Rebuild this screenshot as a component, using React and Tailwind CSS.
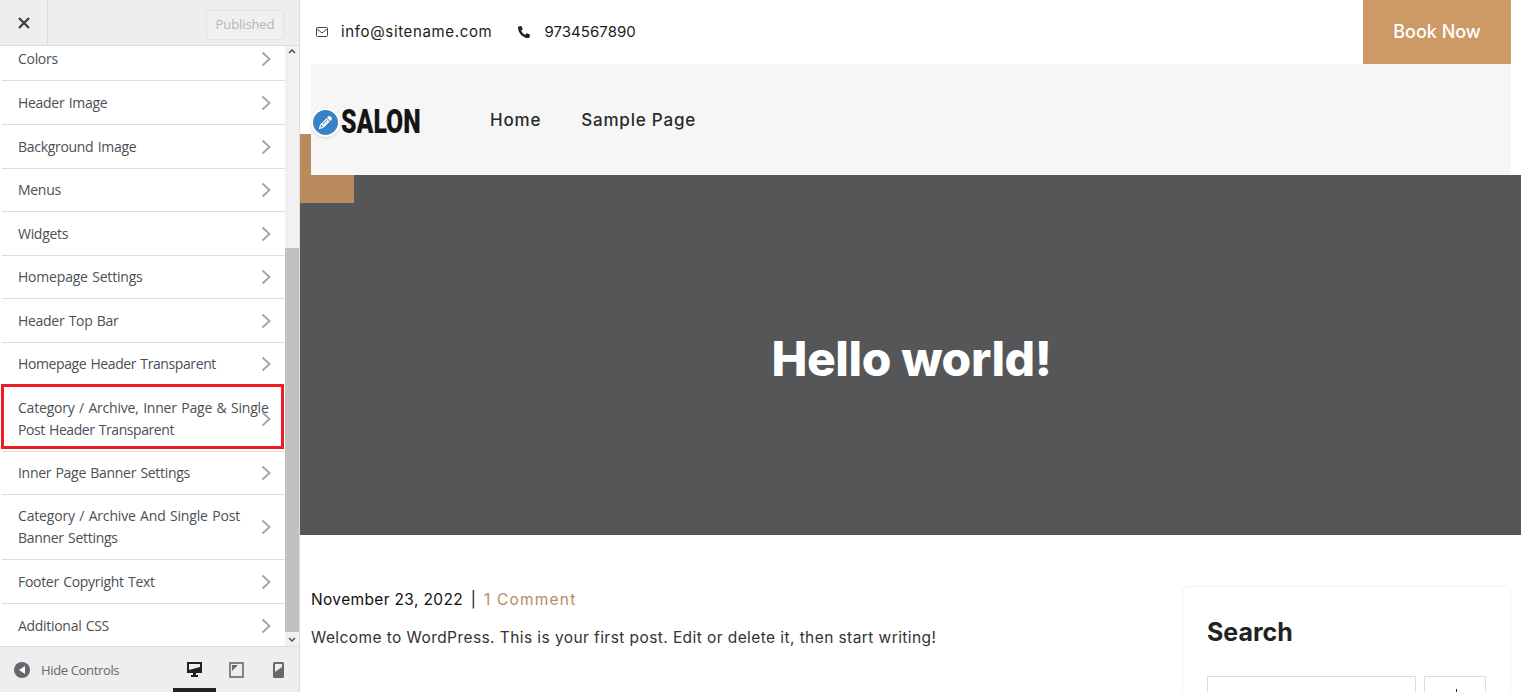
import React from 'react';
import { FaPhoneAlt } from 'react-icons/fa';
import { FaPencil } from 'react-icons/fa6';

const sections = [
  { lines: [['Colors', 'tracking-[-0.3px]']], cls: 'h-[43.5px]' },
  { lines: [['Header Image', 'tracking-[-0.3px]']], cls: 'h-[44px]' },
  { lines: [['Background Image', 'tracking-[-0.3px]']], cls: 'h-[43.5px]' },
  { lines: [['Menus', 'tracking-[-0.3px]']], cls: 'h-[43.5px]' },
  { lines: [['Widgets', 'tracking-[-0.3px]']], cls: 'h-[43.5px]' },
  { lines: [['Homepage Settings', 'tracking-[-0.2px]']], cls: 'h-[43.5px]' },
  { lines: [['Header Top Bar', 'tracking-[-0.3px]']], cls: 'h-[43.5px]' },
  { lines: [['Homepage Header Transparent', 'tracking-[-0.4px]']], cls: 'h-[43.5px]' },
  {
    lines: [
      ['Category / Archive, Inner Page & Single', 'tracking-[-0.2px]'],
      ['Post Header Transparent', 'tracking-[-0.43px]'],
    ],
    cls: 'h-[65.5px]',
  },
  { lines: [['Inner Page Banner Settings', 'tracking-[-0.3px]']], cls: 'h-[43.5px]' },
  {
    lines: [
      ['Category / Archive And Single Post', 'tracking-[-0.18px]'],
      ['Banner Settings', 'tracking-[-0.3px]'],
    ],
    cls: 'h-[65px]',
  },
  { lines: [['Footer Copyright Text', 'tracking-[-0.3px]']], cls: 'h-[44px]' },
  { lines: [['Additional CSS', 'tracking-[-0.3px]']], cls: 'h-[43.5px]' },
];

const Chevron = () => (
  <svg width="10" height="16" viewBox="0 0 10 16" fill="none" className="shrink-0">
    <path d="M1.5 1.5 8.5 8l-7 6.5" stroke="#a0a5aa" strokeWidth="1.8" />
  </svg>
);

const Sidebar = () => (
  <aside className="relative w-[300px] shrink-0 h-full flex flex-col bg-[#eeeeee] border-r border-[#dddddd] font-['Open_Sans',sans-serif]">
    {/* top bar */}
    <div className="h-[46px] shrink-0 flex items-center border-b border-[#dddddd]">
      <div className="w-12 h-full flex items-center justify-center border-r border-[#dddddd]">
        <svg width="12" height="12" viewBox="0 0 12 12">
          <path d="M1 1l10 10M11 1 1 11" stroke="#3c434a" strokeWidth="2.4" />
        </svg>
      </div>
      <div className="ml-auto mr-[15px] mt-[4px] w-[78px] h-[30px] flex items-center justify-center rounded-[3px] border border-[#e2e2e2] bg-[#f0f0f0] text-[13px] text-[#b4b6b8] tracking-[-0.1px]">
        Published
      </div>
    </div>

    {/* section list + scrollbar */}
    <div className="flex-1 flex min-h-0">
      <div className="flex-1 min-w-0 overflow-hidden bg-white pl-[2px]">
        <div className="-mt-[8.25px]">
          {sections.map((s) => (
            <div
              key={s.lines[0][0]}
              className={`${s.cls} flex items-center pl-[16px] border-b border-[#dddddd] text-[14px] leading-[22px] font-medium text-[#4a5056] [word-spacing:1px]`}
            >
              <span className="w-[252px] -mr-[9px] shrink-0">
                {s.lines.map(([text, track]) => (
                  <span key={text} className={`block whitespace-nowrap ${track}`}>{text}</span>
                ))}
              </span>
              <Chevron />
            </div>
          ))}
        </div>
      </div>
      <div className="w-[14px] shrink-0 bg-[#f1f1f1] flex flex-col items-center">
        <svg width="8" height="5" viewBox="0 0 8 5" className="mt-[3px] shrink-0">
          <path d="M1 4 4 1l3 3" stroke="#505050" strokeWidth="1.5" fill="none" />
        </svg>
        <div className="w-full h-[384px] mt-[194px] bg-[#c1c1c1]" />
        <svg width="8" height="5" viewBox="0 0 8 5" className="mt-[5px] shrink-0">
          <path d="M1 1l3 3 3-3" stroke="#505050" strokeWidth="1.5" fill="none" />
        </svg>
      </div>
    </div>

    {/* footer */}
    <div className="relative h-[46px] shrink-0 flex items-center border-t border-[#dddddd] bg-[#eeeeee]">
      <svg width="16" height="16" viewBox="0 0 16 16" className="ml-[14px]">
        <circle cx="8" cy="8" r="8" fill="#646970" />
        <path d="M5 8l6-4v8z" fill="#fff" />
      </svg>
      <span className="ml-[11px] mt-[2px] text-[13px] text-[#646970] tracking-[-0.35px]">Hide Controls</span>
      <svg width="17" height="17" viewBox="0 0 17 17" className="absolute left-[186px] top-[14px]">
        <path d="M1 1h15v11H10v2h2v2H5v-2h2v-2H1z" fill="#1d2327" />
        <path d="M3 3h11v3L3 9z" fill="#eee" />
      </svg>
      <svg width="15" height="16" viewBox="0 0 15 16" className="absolute left-[229px] top-[15px]">
        <rect x="1" y="1" width="13" height="14" fill="none" stroke="#646970" strokeWidth="1.6" />
        <path d="M3 3h6L3 9z" fill="#646970" />
      </svg>
      <svg width="11" height="16" viewBox="0 0 11 16" className="absolute left-[273px] top-[15px]">
        <rect x="0" y="0" width="11" height="16" rx="1.5" fill="#646970" />
        <path d="M2 2h7v3L2 10z" fill="#eee" />
      </svg>
      <div className="absolute left-[173px] bottom-0 w-[43px] h-[4px] bg-[#1d2327]" />
    </div>

    {/* red highlight round the section */}
    <div className="absolute left-[1px] top-[384px] w-[283px] h-[65px] border-[3px] border-[#ee1c25] pointer-events-none" />
  </aside>
);

const Preview = () => (
  <main className="relative flex-1 min-w-0 h-full overflow-hidden bg-white font-['Inter',sans-serif]">
    {/* tan block behind the header */}
    <div className="absolute left-0 top-[134px] w-[54px] h-[69px] bg-[#b98b5c]" />

    <div className="h-16 pl-[16px] pr-[10px] flex items-center relative">
      <svg width="12" height="10" viewBox="0 0 12 10" fill="none" stroke="#444" strokeWidth="1">
        <rect x="0.5" y="0.5" width="11" height="9" rx="1" />
        <path d="M.5 1.5 6 6l5.5-4.5" />
      </svg>
      <span className="ml-[13px] text-[15px] text-[#1b1b1b] tracking-[0.65px]">info@sitename.com</span>
      <FaPhoneAlt className="ml-[26px] text-[12px] text-[#222]" />
      <span className="ml-[14px] text-[15px] text-[#1b1b1b] tracking-[0.05px]">9734567890</span>
      <div className="ml-auto w-[148px] h-full flex items-center justify-center bg-[#cd9a66] text-white text-[18px] font-medium pb-[2px]">
        Book Now
      </div>
    </div>

    <div className="relative ml-[11px] mr-[10px] h-[111px] flex items-center bg-[#f6f6f6]">
      <span className="ml-[30px] w-[79px] inline-block origin-left scale-x-[0.73] font-['Roboto',sans-serif] font-black text-[34px] leading-none text-[#151515] mt-[2px] whitespace-nowrap">
        SALON
      </span>
      <span className="ml-[70px] mt-[2px] text-[17px] font-medium text-[#2a2a2a] tracking-[0.8px]">Home</span>
      <span className="ml-[40px] mt-[2px] text-[17px] font-medium text-[#2a2a2a] tracking-[0.8px]">Sample Page</span>
      <div className="absolute left-[0px] top-[44px] w-[29px] h-[29px] rounded-full bg-[#3582c4] border-2 border-white shadow flex items-center justify-center">
        <FaPencil className="text-[13px] text-white" />
      </div>
    </div>

    <div className="h-[360px] flex items-center justify-center bg-[#555658] pt-[8px]">
      <h1 className="relative pl-[2px] text-[48px] font-extrabold text-white tracking-[-0.4px] leading-none">Hello world!</h1>
    </div>

    <div className="flex pl-[11px] pr-[10px]">
      <div className="flex-1 min-w-0 pt-[53px]">
        <p className="text-[15.5px] text-[#111] leading-6 tracking-[0.35px]">
          November 23, 2022 <span className="mx-[3px]">|</span> <span className="text-[#b98b5c] tracking-[1.2px]">1 Comment</span>
        </p>
        <p className="mt-[14px] text-[15.5px] text-[#333] leading-6 tracking-[0.42px]">
          Welcome to WordPress. This is your first post. Edit or delete it, then start writing!
        </p>
      </div>
      <div className="w-[329px] shrink-0 mt-[51px] h-[200px] rounded-[6px] border border-[#f3f3f3] pt-[30px] px-[24px]">
        <h2 className="text-[25px] leading-[30px] font-bold text-[#222]">Search</h2>
        <div className="mt-[29px] flex gap-2">
          <div className="w-[209px] h-10 border border-[#dddddd]" />
          <div className="w-[62px] h-10 border border-[#dddddd] flex justify-center pt-[12px]">
            <div className="w-[1px] h-[3px] bg-[#222] ml-[2px]" />
          </div>
        </div>
      </div>
    </div>
  </main>
);

const App = () => (
  <div className="w-[1521px] h-[692px] flex overflow-hidden bg-white">
    <Sidebar />
    <Preview />
  </div>
);

export default App;
